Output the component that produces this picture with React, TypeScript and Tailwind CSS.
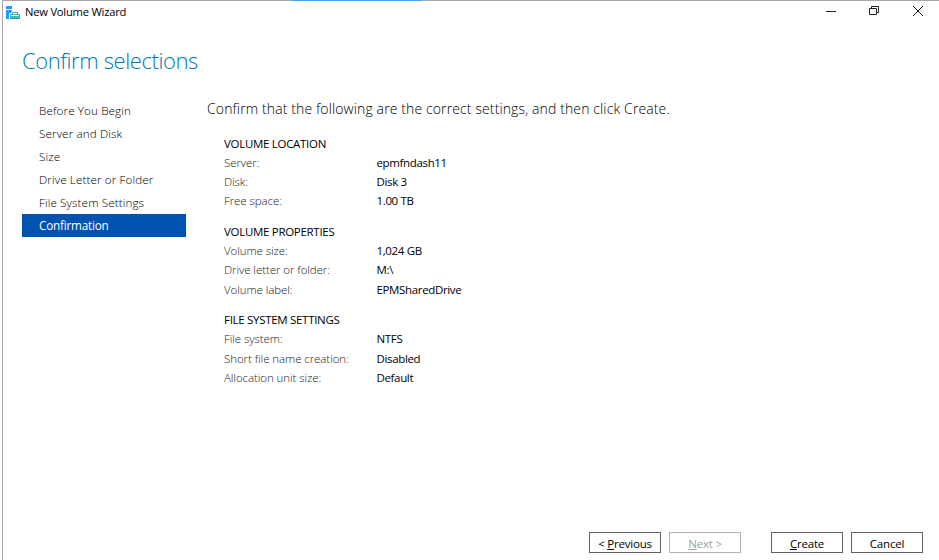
import type { ReactNode } from "react";

const steps = [
  "Before You Begin",
  "Server and Disk",
  "Size",
  "Drive Letter or Folder",
  "File System Settings",
  "Confirmation",
];

const groups: { title: string; rows: [string, string][] }[] = [
  {
    title: "VOLUME LOCATION",
    rows: [
      ["Server:", "epmfndash11"],
      ["Disk:", "Disk 3"],
      ["Free space:", "1.00 TB"],
    ],
  },
  {
    title: "VOLUME PROPERTIES",
    rows: [
      ["Volume size:", "1,024 GB"],
      ["Drive letter or folder:", "M:\\"],
      ["Volume label:", "EPMSharedDrive"],
    ],
  },
  {
    title: "FILE SYSTEM SETTINGS",
    rows: [
      ["File system:", "NTFS"],
      ["Short file name creation:", "Disabled"],
      ["Allocation unit size:", "Default"],
    ],
  },
];

function WizardIcon() {
  return (
    <svg width="14" height="14" viewBox="0 0 14 14">
      <path d="M0 0h6v3H0zM0 4h6v9H0z" fill="#1a9fff" />
      <path d="M3 13V7h2l1-2h6l1 2h1v6z" fill="#fff" />
      <path d="M6.5 8V6.5h5V8" fill="none" stroke="#3aa0a4" />
      <rect x="4" y="8" width="10" height="5" rx="0.5" fill="#3fbdb6" />
      <rect x="5" y="9" width="8" height="1" fill="#c8f2ec" />
      <rect x="4" y="12" width="10" height="1" fill="#1f9da0" />
    </svg>
  );
}

function Button({ children, disabled }: { children: ReactNode; disabled?: boolean }) {
  return (
    <button
      disabled={disabled}
      className={
        "flex h-[21px] w-[72px] items-center justify-center whitespace-pre border pt-[2px] text-[11.5px] tracking-[-0.2px] " +
        (disabled ? "border-[#b4b4b4] text-[#a0a0a0]" : "border-[#606060] text-black")
      }
    >
      <span>{children}</span>
    </button>
  );
}

export default function App() {
  return (
    <div className="flex h-[560px] w-[939px] overflow-hidden bg-white font-['Open_Sans','Noto_Sans',sans-serif]">
      <div className="w-[2px] shrink-0" />
      <div className="flex min-w-0 flex-1 flex-col border-l border-[#a8a8a8]">
        <div className="flex h-px shrink-0 bg-[#a8a8a8]">
          <div className="ml-[288px] h-px w-[131px] bg-[#3aa5f5]" />
        </div>
        <header className="flex h-[23px] shrink-0 items-center pl-[3px]">
          <WizardIcon />
          <h1 className="ml-[5px] text-[11.2px] tracking-[-0.22px] text-black">New Volume Wizard</h1>
          <svg className="mb-[3px] ml-auto mr-[15px]" width="98" height="12" viewBox="0 0 98 12" fill="none" stroke="#222">
            <path d="M0 6.5h10" />
            <path d="M43.5 3.5h7v6h-7zM45.5 3.5v-2h7v6h-2" />
            <path d="M87 1l10 10M97 1L87 11" />
          </svg>
        </header>
        <h2 className="ml-[19px] mt-[19px] h-[34px] text-[22px] font-light leading-[34px] tracking-[-0.4px] text-[#007ab0]">
          Confirm selections
        </h2>
        <div className="mt-[22px] flex">
          <nav className="ml-[19px] w-[164px]">
            {steps.map((step) => (
              <div
                key={step}
                className={
                  "h-[23px] pl-[17px] text-[11.7px] leading-[23px] " +
                  (step === "Confirmation"
                    ? "bg-[#0054b0] tracking-[-0.2px] text-white"
                    : "font-light tracking-[0.1px] text-black")
                }
              >
                {step}
              </div>
            ))}
          </nav>
          <main className="ml-[21px]">
            <p className="text-[14px] font-light leading-[20px] tracking-[0.12px] text-black">
              Confirm that the following are the correct settings, and then click Create.
            </p>
            <div className="ml-[17px] mt-[14.5px] flex flex-col gap-[11.3px] text-[11.5px] leading-[19.25px]">
              {groups.map((g) => (
                <section key={g.title}>
                  <h3 className="tracking-[-0.3px] text-black">{g.title}</h3>
                  {g.rows.map(([label, value]) => (
                    <div key={label} className="flex">
                      <span className="w-[152.5px] font-light tracking-[-0.07px] text-[#222]">{label}</span>
                      <span className="tracking-[-0.35px] text-black">{value}</span>
                    </div>
                  ))}
                </section>
              ))}
            </div>
          </main>
        </div>
        <footer className="mb-[7px] mr-[16px] mt-auto flex justify-end gap-2">
          <Button>
            {"< "}
            <u>P</u>revious
          </Button>
          <Button disabled>
            <u>N</u>
            {"ext >"}
          </Button>
          <div className="w-[14px]" />
          <Button>
            <u>C</u>reate
          </Button>
          <Button>Cancel</Button>
        </footer>
      </div>
    </div>
  );
}
